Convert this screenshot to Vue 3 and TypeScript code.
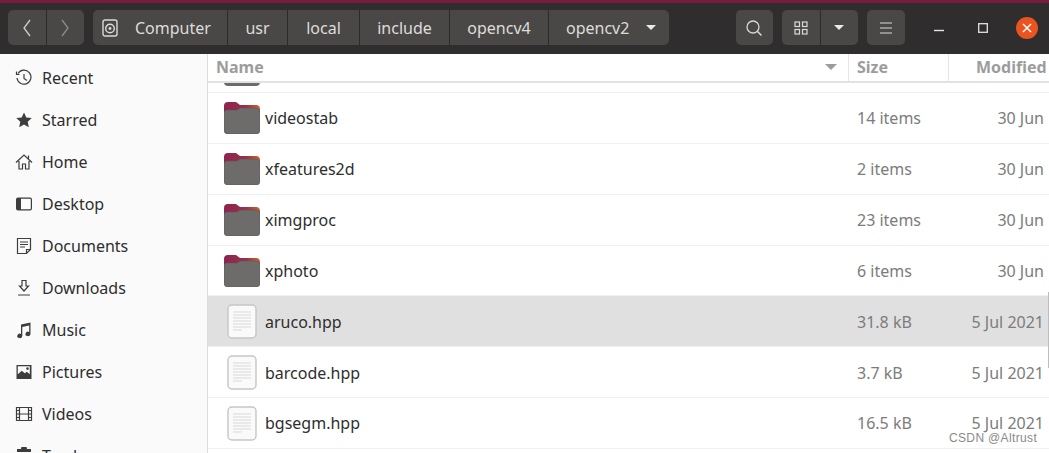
<template>
  <div class="window">
    <div class="accent"></div>
    <header class="toolbar">
      <div class="group nav">
        <button class="btn nav-btn">
          <svg width="12" height="20" viewBox="0 0 12 20"><path d="M9 2 3 10l6 8" fill="none" stroke="#cfcdca" stroke-width="1.3" /></svg>
        </button>
        <button class="btn nav-btn">
          <svg width="12" height="20" viewBox="0 0 12 20"><path d="m3 2 6 8-6 8" fill="none" stroke="#8e8c8a" stroke-width="1.3" /></svg>
        </button>
      </div>
      <div class="group path">
        <button v-for="(crumb, i) in crumbs" :key="crumb.label" class="btn crumb" :style="{ width: crumb.width + 'px' }">
          <svg v-if="i === 0" class="disk" width="16" height="18" viewBox="0 0 16 18">
            <rect x="1" y="1" width="14" height="16" rx="2" fill="none" stroke="#dcdad8" stroke-width="1.4" />
            <circle cx="8" cy="9.500" r="4.300" fill="none" stroke="#dcdad8" stroke-width="1.4" />
            <circle cx="8" cy="9.500" r="1.400" fill="#dcdad8" />
          </svg>
          <span>{{ crumb.label }}</span>
          <i v-if="i === crumbs.length - 1" class="caret"></i>
        </button>
      </div>
      <div class="spacer"></div>
      <button class="btn square">
        <svg width="18" height="18" viewBox="0 0 18 18"><circle cx="8" cy="8" r="6" fill="none" stroke="#d8d6d4" stroke-width="1.3" /><path d="m12.500 12.500 4 4" stroke="#d8d6d4" stroke-width="1.6" /></svg>
      </button>
      <div class="group views">
        <button class="btn square">
          <svg width="14" height="14" viewBox="0 0 14 14" fill="none" stroke="#dcdad8" stroke-width="1.2"><rect x="1" y="1" width="4.500" height="4.500" /><rect x="8.500" y="1" width="4.500" height="4.500" /><rect x="1" y="8.500" width="4.500" height="4.500" /><rect x="8.500" y="8.500" width="4.500" height="4.500" /></svg>
        </button>
        <button class="btn square"><i class="caret"></i></button>
      </div>
      <button class="btn square">
        <svg width="12" height="12" viewBox="0 0 12 12"><path d="M0 1h12M0 6h12M0 11h12" stroke="#dcdad8" stroke-width="1.1" /></svg>
      </button>
      <div class="controls">
        <svg width="10" height="10" viewBox="0 0 10 10"><path d="M0 7.500h10" stroke="#e4e2e0" stroke-width="1.4" /></svg>
        <svg width="10" height="10" viewBox="0 0 10 10"><rect x=".7" y=".7" width="8.600" height="8.600" fill="none" stroke="#e4e2e0" stroke-width="1.3" /></svg>
        <span class="close">
          <svg width="10" height="10" viewBox="0 0 10 10"><path d="m1 1 8 8M9 1 1 9" stroke="#fff" stroke-width="1.5" /></svg>
        </span>
      </div>
    </header>
    <div class="main">
      <aside class="sidebar">
        <div v-for="place in places" :key="place.label" class="place">
          <svg width="18" height="18" viewBox="0 0 18 18" class="place-icon">
            <path :d="place.icon" :fill="place.filled ? '#3d3d3d' : 'none'" :stroke="place.filled ? 'none' : '#3d3d3d'" stroke-width="1.2" fill-rule="evenodd" />
          </svg>
          <span>{{ place.label }}</span>
        </div>
      </aside>
      <section class="list">
        <div class="columns">
          <div class="col name-col">Name <i class="sort"></i></div>
          <div class="col size-col">Size</div>
          <div class="col date-col">Modified</div>
        </div>
        <div class="clipped">
          <svg width="36" height="32" viewBox="0 0 36 32"><path :d="folderBody" fill="#6e6b6b" /></svg>
        </div>
        <div v-for="file in files" :key="file.name" class="row" :class="{ selected: file.selected }">
          <div class="thumb">
            <svg v-if="file.folder" class="folder" width="36" height="32" viewBox="0 0 36 32">
              <defs>
                <linearGradient :id="'tab-' + file.name" x1="0" x2="1" y1="0" y2="0">
                  <stop offset="0" stop-color="#8c2450" />
                  <stop offset=".6" stop-color="#98304a" />
                  <stop offset="1" stop-color="#cc642c" />
                </linearGradient>
              </defs>
              <path d="M4 0h8l4 3h16a4 4 0 0 1 4 4v6H0V4a4 4 0 0 1 4-4Z" :fill="'url(#tab-' + file.name + ')'" />
              <path :d="folderBody" fill="#6e6b6b" stroke="#5c5457" stroke-width=".6" />
            </svg>
            <svg v-else class="doc" width="30" height="35" viewBox="0 0 30 35">
              <rect x="1" y="1" width="28" height="33" rx="4" fill="#fafafa" stroke="#c6c6c6" stroke-width="1.4" />
              <path d="M6 8h18M6 11h18M6 14h18M6 17h18M6 20h18M6 23h18M6 26h9" stroke="#d9d9d9" />
            </svg>
          </div>
          <span class="file-name">{{ file.name }}</span>
          <span class="file-size">{{ file.size }}</span>
          <span class="file-date">{{ file.date }}</span>
        </div>
        <div class="scrollbar"></div>
      </section>
    </div>
    <div class="watermark">CSDN @Altrust</div>
  </div>
</template>

<script setup lang="ts">
interface Place {
  label: string
  icon: string
  filled?: boolean
}

interface FileRow {
  name: string
  size: string
  date: string
  folder?: boolean
  selected?: boolean
}

const folderBody = 'M3 8h10l3-2h16a4 4 0 0 1 4 4v18a4 4 0 0 1-4 4H4a4 4 0 0 1-4-4V11a3 3 0 0 1 3-3Z'

const crumbs = [
  { label: 'Computer', width: 134 },
  { label: 'usr', width: 59 },
  { label: 'local', width: 71 },
  { label: 'include', width: 89 },
  { label: 'opencv4', width: 98 },
  { label: 'opencv2', width: 120 },
]

const places: Place[] = [
  { label: 'Recent', icon: 'M3 4.500A7 7 0 1 1 2 9M1.500 2.500V5.500H4.500M9 5v4.500l3 2' },
  { label: 'Starred', filled: true, icon: 'm9 1.500 2.300 5 5.400.6-4 3.700 1.100 5.400L9 13.500l-4.800 2.700 1.100-5.400-4-3.700 5.400-.6Z' },
  { label: 'Home', icon: 'M1 9.500 9 2l8 7.500M4 8v8h3.500v-5h3v5H14V8M13.500 2.500v3' },
  { label: 'Desktop', filled: true, icon: 'M3 2.500h12a2 2 0 0 1 2 2v9a2 2 0 0 1-2 2H3a2 2 0 0 1-2-2v-9a2 2 0 0 1 2-2Zm3 1.200v10.600h9a.8.8 0 0 0 .8-.8v-9a.8.8 0 0 0-.8-.8Z' },
  { label: 'Documents', icon: 'M2.500 1.500h13v11l-4 4h-9ZM15.500 12.500h-4v4M5 5h8M5 7.500h8M5 10h5' },
  { label: 'Downloads', icon: 'M7 1.500h4V7h2.500L9 12 4.500 7H7ZM3 16h12' },
  { label: 'Music', filled: true, icon: 'M6 3.500 15.500 1.500V13a2.500 2.200 0 1 1-1.300-2V4.500L7.300 6V15a2.500 2.200 0 1 1-1.300-2Z' },
  { label: 'Pictures', filled: true, icon: 'M1.500 2h15v14h-15Zm1.300 1.300v8l4-3.500 3 2.500 2-1.500 3 2.500v-8Zm9.700 1a1.300 1.300 0 1 1 0 2.600 1.300 1.300 0 0 1 0-2.600Z' },
  { label: 'Videos', icon: 'M1.500 2.500h15v13h-15ZM4.500 2.500v13M13.500 2.500v13M4.500 9h9M1.500 5.500h3M1.500 9h3M1.500 12.500h3M13.500 5.500h3M13.500 9h3M13.500 12.500h3' },
  { label: 'Trash', filled: true, icon: 'M6 2a3 3 0 0 1 6 0h4v3H2V2Zm-3 4h12v11H3Z' },
]

const files: FileRow[] = [
  { name: 'videostab', size: '14 items', date: '30 Jun', folder: true },
  { name: 'xfeatures2d', size: '2 items', date: '30 Jun', folder: true },
  { name: 'ximgproc', size: '23 items', date: '30 Jun', folder: true },
  { name: 'xphoto', size: '6 items', date: '30 Jun', folder: true },
  { name: 'aruco.hpp', size: '31.8 kB', date: '5 Jul 2021', selected: true },
  { name: 'barcode.hpp', size: '3.7 kB', date: '5 Jul 2021' },
  { name: 'bgsegm.hpp', size: '16.5 kB', date: '5 Jul 2021' },
]
</script>

<style>
html,
body {
  margin: 0;
  overflow: hidden;
}
</style>

<style scoped>
.window {
  position: relative;
  width: 1049px;
  height: 453px;
  overflow: hidden;
  display: flex;
  flex-direction: column;
  font-family: "Noto Sans", "Open Sans", sans-serif;
  font-size: 16px;
  background: #fff;
}

.accent {
  height: 3px;
  background: #771c3e;
}

.toolbar {
  height: 51px;
  flex: none;
  box-sizing: border-box;
  padding: 7px 11px 9px 8px;
  display: flex;
  align-items: stretch;
  background: #2f2d2d;
}

.group {
  display: flex;
  gap: 1px;
  border-radius: 5px;
  overflow: hidden;
  background: #2c2a2a;
}

.btn {
  display: flex;
  align-items: center;
  justify-content: center;
  padding: 0;
  border: 0;
  font: inherit;
  color: #dedcda;
  background: #4a4847;
}

.nav-btn {
  width: 37.5px;
}

.path {
  margin-left: 9px;
}

.crumb {
  box-sizing: border-box;
}

.crumb:first-child {
  justify-content: flex-start;
  padding-left: 9px;
  gap: 17px;
}

.crumb:last-child {
  justify-content: flex-start;
  padding-left: 17px;
  gap: 17px;
}

.spacer {
  flex: 1;
}

.square {
  width: 37.5px;
  border-radius: 5px;
}

.views {
  margin: 0 9px;
}

.views .square {
  border-radius: 0;
}

.caret {
  width: 0;
  height: 0;
  border-left: 5px solid transparent;
  border-right: 5px solid transparent;
  border-top: 5px solid #eceae8;
}

.controls {
  display: flex;
  align-items: center;
  margin-left: 29.5px;
  gap: 34px;
}

.close {
  display: flex;
  align-items: center;
  justify-content: center;
  width: 22px;
  height: 22px;
  border-radius: 50%;
  margin-left: -6px;
  background: #e95420;
}

.main {
  flex: 1;
  display: flex;
  min-height: 0;
}

.sidebar {
  width: 208px;
  flex: none;
  box-sizing: border-box;
  padding-top: 3px;
  border-right: 1px solid #dcdcdc;
  background: #fafafa;
  color: #2e2e2e;
}

.place {
  height: 42px;
  display: flex;
  align-items: center;
  padding-left: 15px;
  gap: 9px;
}

.list {
  position: relative;
  flex: 1;
  min-width: 0;
  color: #2e2e2e;
}

.columns {
  height: 27px;
  display: flex;
  align-items: center;
  border-bottom: 2px solid #e2e2e2;
  font-weight: 700;
  color: #9c9c9c;
}

.col {
  height: 100%;
  display: flex;
  align-items: center;
  box-sizing: border-box;
  padding-bottom: 2px;
  white-space: nowrap;
  overflow: hidden;
}

.name-col {
  width: 640px;
  padding-left: 8px;
  justify-content: space-between;
  padding-right: 11px;
}

.size-col {
  width: 100px;
  padding-left: 8px;
  border-left: 1px solid #e6e6e6;
}

.date-col {
  flex: 1;
  padding-left: 27px;
  border-left: 1px solid #e6e6e6;
}

.sort {
  border-left: 6px solid transparent;
  border-right: 6px solid transparent;
  border-top: 6px solid #9c9c9c;
}

.clipped {
  height: 9px;
  padding-left: 16px;
  overflow: hidden;
  border-bottom: 1px solid #f0f0f0;
}

.clipped svg {
  display: block;
  margin-top: -29px;
}

.row {
  height: 50.85px;
  box-sizing: border-box;
  padding-top: 1px;
  display: flex;
  align-items: center;
  border-bottom: 1px solid #f0f0f0;
}

.row.selected {
  background: #e0e0e0;
}

.thumb {
  width: 57px;
  flex: none;
  display: flex;
}

.folder {
  margin-left: 16px;
}

.doc {
  margin-left: 19px;
}

.file-name {
  width: 592px;
  flex: none;
}

.file-size {
  width: 100px;
  flex: none;
  color: #7c7c7c;
}

.file-date {
  flex: 1;
  line-height: 16px;
  text-align: right;
  padding-right: 5px;
  color: #7c7c7c;
}

.scrollbar {
  position: absolute;
  right: 0;
  top: 238px;
  width: 1px;
  height: 76px;
  background: #bdbdbd;
}

.watermark {
  position: absolute;
  left: 949px;
  top: 433px;
  font-family: "Liberation Sans", Arial, sans-serif;
  font-size: 12px;
  line-height: 10px;
  letter-spacing: .35px;
  color: #8a8a8a;
}
</style>
